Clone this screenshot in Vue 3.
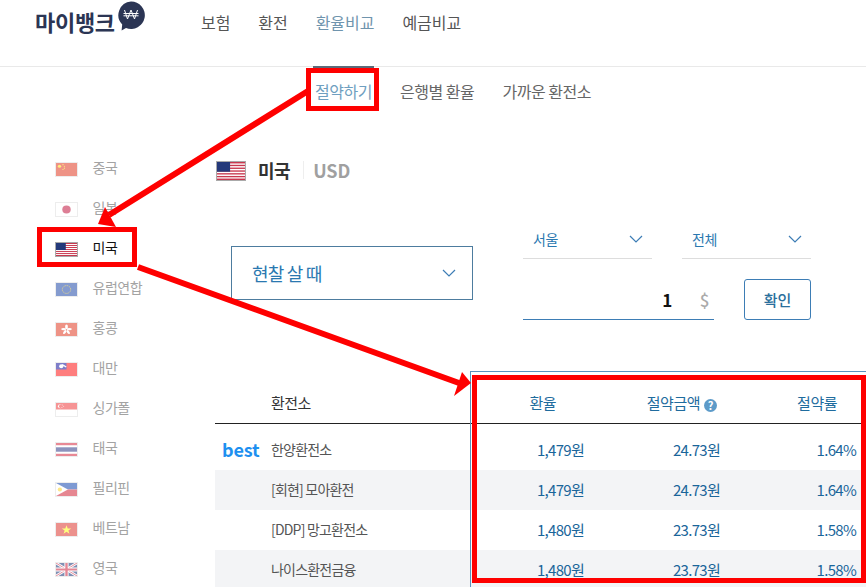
<script setup>
const usa = '<rect width="30" height="20" fill="#fff"/><g fill="#c8384f"><rect width="30" height="1.6"/><rect y="3.1" width="30" height="1.5"/><rect y="6.2" width="30" height="1.5"/><rect y="9.3" width="30" height="1.5"/><rect y="12.4" width="30" height="1.5"/><rect y="15.5" width="30" height="1.5"/><rect y="18.4" width="30" height="1.6"/></g><rect width="14" height="10.8" fill="#24397a"/>'
const flags = {
  cn: '<rect width="30" height="20" fill="#de2910"/><g fill="#ffde00"><circle cx="5" cy="5" r="2.4"/><circle cx="10" cy="2.5" r=".9"/><circle cx="12" cy="5" r=".9"/><circle cx="12" cy="8" r=".9"/><circle cx="10" cy="10" r=".9"/></g>',
  jp: '<rect width="30" height="20" fill="#fff"/><circle cx="15" cy="10" r="6" fill="#bc002d"/>',
  us: usa,
  eu: '<rect width="30" height="20" fill="#0b3aa0"/><circle cx="15" cy="10" r="6" fill="none" stroke="#ffcc00" stroke-width="1.4" stroke-dasharray="1.4 1.7"/>',
  hk: '<rect width="30" height="20" fill="#de2910"/><g fill="#fff"><ellipse cx="15" cy="6" rx="2" ry="3.6"/><ellipse cx="11" cy="9.4" rx="3.6" ry="1.8"/><ellipse cx="19" cy="9.4" rx="3.6" ry="1.8"/><ellipse cx="12.5" cy="14" rx="1.8" ry="3.4" transform="rotate(35 12.5 14)"/><ellipse cx="17.5" cy="14" rx="1.8" ry="3.4" transform="rotate(-35 17.5 14)"/></g>',
  tw: '<rect width="30" height="20" fill="#fe0000"/><rect width="15" height="10" fill="#000095"/><circle cx="7.5" cy="5" r="3" fill="#fff"/><rect x="7" y="1" width="7" height="2" fill="#fff" transform="rotate(35 7.5 5)"/>',
  sg: '<rect width="30" height="20" fill="#fff"/><rect width="30" height="10" fill="#ef2b2d"/><circle cx="6" cy="5" r="3.2" fill="#fff"/><circle cx="7.3" cy="5" r="3" fill="#ef2b2d"/><g fill="#fff"><circle cx="9" cy="3" r=".7"/><circle cx="11" cy="5" r=".7"/><circle cx="8.5" cy="7" r=".7"/></g>',
  th: '<rect width="30" height="20" fill="#fff"/><rect width="30" height="3.4" fill="#d3152d"/><rect y="16.6" width="30" height="3.4" fill="#d3152d"/><rect y="6.6" width="30" height="6.8" fill="#1c2a7d"/>',
  ph: '<rect width="30" height="10" fill="#0038a8"/><rect y="10" width="30" height="10" fill="#ce1126"/><polygon points="0,0 17,10 0,20" fill="#fff"/><circle cx="5.5" cy="10" r="3" fill="#fcd116"/>',
  vn: '<rect width="30" height="20" fill="#da251d"/><polygon points="15,3.6 16.7,8.4 21.8,8.4 17.7,11.5 19.2,16.4 15,13.5 10.8,16.4 12.3,11.5 8.2,8.4 13.3,8.4" fill="#ffff00"/>',
  uk: '<rect width="30" height="20" fill="#012169"/><path d="M0 0L30 20M30 0L0 20" stroke="#fff" stroke-width="4"/><path d="M0 0L30 20M30 0L0 20" stroke="#c8102e" stroke-width="1.4"/><path d="M15 0V20M0 10H30" stroke="#fff" stroke-width="6"/><path d="M15 0V20M0 10H30" stroke="#c8102e" stroke-width="3.4"/>'
}
const countries = [
  { name: '중국', flag: 'cn' },
  { name: '일본', flag: 'jp' },
  { name: '미국', flag: 'us', on: true },
  { name: '유럽연합', flag: 'eu' },
  { name: '홍콩', flag: 'hk' },
  { name: '대만', flag: 'tw' },
  { name: '싱가폴', flag: 'sg' },
  { name: '태국', flag: 'th' },
  { name: '필리핀', flag: 'ph' },
  { name: '베트남', flag: 'vn' },
  { name: '영국', flag: 'uk' }
]
const rows = [
  { name: '한양환전소', rate: '1,479원', save: '24.73원', pct: '1.64%', best: true },
  { name: '[회현] 모아환전', rate: '1,479원', save: '24.73원', pct: '1.64%' },
  { name: '[DDP] 망고환전소', rate: '1,480원', save: '23.73원', pct: '1.58%' },
  { name: '나이스환전금융', rate: '1,480원', save: '23.73원', pct: '1.58%' }
]
</script>

<template>
  <div class="page">
    <header class="top">
      <div class="logo">
        <span class="logo-text">마이뱅크</span>
        <svg class="logo-mark" width="30" height="32" viewBox="0 0 30 32">
          <path d="M15 1.500a13.700 13.700 0 1 1-5 26.400L5.600 30.600l.6-6A13.700 13.700 0 0 1 15 1.500z" fill="#2b3554"/>
          <path d="M8.500 10l3 9 3.500-9 3.500 9 3-9M7.500 13.500h15M7.500 15.800h15" fill="none" stroke="#fff" stroke-width="1"/>
        </svg>
      </div>
      <nav class="nav">
        <a>보험</a>
        <a>환전</a>
        <a class="current">환율비교</a>
        <a>예금비교</a>
      </nav>
    </header>

    <div class="subnav">
      <a class="current">절약하기</a>
      <a>은행별 환율</a>
      <a>가까운 환전소</a>
    </div>

    <div class="content">
      <aside class="side">
        <div v-for="c in countries" :key="c.name" class="side-item" :class="{ on: c.on }">
          <svg class="flag-small" viewBox="0 0 30 20" preserveAspectRatio="none" v-html="flags[c.flag]"></svg>
          <span>{{ c.name }}</span>
        </div>
      </aside>

      <main class="main">
        <div class="title">
          <svg class="flag-big" viewBox="0 0 30 20" preserveAspectRatio="none" v-html="flags.us"></svg>
          <strong>미국</strong>
          <span class="code">USD</span>
        </div>

        <div class="controls">
          <div class="kind">
            <span>현찰 살 때</span>
            <svg width="14" height="8" viewBox="0 0 14 8"><path d="M1 1l6 6 6-6" class="chev"/></svg>
          </div>
          <div class="filters">
            <div class="selects">
              <div class="mini"><span>서울</span><svg width="14" height="8" viewBox="0 0 14 8"><path d="M1 1l6 6 6-6" class="chev"/></svg></div>
              <div class="mini"><span>전체</span><svg width="14" height="8" viewBox="0 0 14 8"><path d="M1 1l6 6 6-6" class="chev"/></svg></div>
            </div>
            <div class="amount">
              <div class="input"><b>1</b><span>$</span></div>
              <button class="ok">확인</button>
            </div>
          </div>
        </div>

        <div class="table">
          <div class="row head">
            <span></span>
            <span class="name">환전소</span>
            <span class="num r1">환율</span>
            <span class="num r2">절약금액<i class="help">?</i></span>
            <span class="num r3">절약률</span>
          </div>
          <div v-for="(r, i) in rows" :key="r.name" class="row body" :class="{ first: i === 0, alt: i % 2 === 1 }">
            <span class="best">{{ r.best ? 'best' : '' }}</span>
            <span class="name">{{ r.name }}</span>
            <span class="num">{{ r.rate }}</span>
            <span class="num">{{ r.save }}</span>
            <span class="num">{{ r.pct }}</span>
          </div>
          <div class="highlight"></div>
        </div>
      </main>
    </div>

    <svg class="marks" width="866" height="587" viewBox="0 0 866 587">
      <g fill="none" stroke="#fe0000">
        <g stroke-width="5">
          <rect x="308.500" y="70.500" width="68" height="38"/>
          <rect x="39.500" y="229.500" width="95" height="35"/>
          <rect x="474.500" y="377.500" width="389" height="203"/>
        </g>
        <path d="M308 91L109 215M138 267L459 383" stroke-width="6"/>
      </g>
      <polygon points="98,224 105,207 116,227" fill="#fe0000"/>
      <polygon points="471,383 462,372 454,396" fill="#fe0000"/>
    </svg>
  </div>
</template>

<style scoped>
.page {
  position: relative;
  width: 866px;
  height: 587px;
  overflow: hidden;
  background: #fff;
  font-family: "Noto Sans CJK KR", "Noto Sans", sans-serif;
  color: #555;
  letter-spacing: -.5px;
}
.top {
  display: flex;
  height: 66px;
  border-bottom: 1px solid #e9e9e9;
  box-sizing: content-box;
}
.logo {
  display: flex;
  align-items: flex-start;
  width: 201px;
  padding-left: 35px;
  box-sizing: border-box;
}
.logo-text {
  margin-top: 5px;
  font-size: 22px;
  line-height: 32px;
  font-weight: 700;
  color: #2b3554;
  letter-spacing: -.3px;
}
.logo-mark { margin: 0 0 0 1px; }
.nav {
  display: flex;
  gap: 28px;
  padding-top: 10px;
  font-size: 16px;
  line-height: 24px;
  color: #555;
  letter-spacing: -.05px;
}
.nav a { position: relative; height: 56px; }
.nav a.current { color: #6f94ad; }
.nav a.current::after {
  content: "";
  position: absolute;
  left: -3px;
  right: 0;
  bottom: -2px;
  height: 2px;
  background: #5b6b7a;
}
.subnav {
  display: flex;
  gap: 28.200px;
  height: 50px;
  padding: 12px 0 0 315px;
  box-sizing: border-box;
  font-size: 16px;
  line-height: 24px;
  color: #666;
}
.subnav .current { color: #6f9fc0; }
.content {
  display: flex;
  margin-top: 31px;
}
.side {
  width: 215px;
  flex: none;
  padding-left: 55px;
  box-sizing: border-box;
}
.side-item {
  display: flex;
  align-items: center;
  height: 40px;
  font-size: 14px;
  color: #a3a3a3;
}
.side-item span { margin: -2px 0 0 14.500px; }
.flag-small {
  width: 23px;
  height: 15px;
  margin-top: 3px;
  box-sizing: border-box;
  border: 1px solid #ddd;
  opacity: .5;
}
.side-item.on { color: #111; }
.side-item.on .flag-small { opacity: 1; border-color: #aaa; }
.main {
  flex: 1;
  min-width: 0;
  padding-top: 13px;
}
.title {
  display: flex;
  align-items: center;
  height: 20px;
  font-size: 18px;
}
.flag-big {
  width: 30px;
  height: 20px;
  margin-left: 1px;
  box-sizing: border-box;
  border: 1px solid #aaa;
}
.title strong {
  margin: -2px 0 0 12px;
  color: #333;
  font-weight: 700;
}
.code {
  margin: -2px 0 0 13px;
  padding-left: 9px;
  border-left: 1px solid #eee;
  line-height: 18px;
  color: #a0a0a0;
  font-weight: 700;
  letter-spacing: 0;
}
.controls {
  display: flex;
  margin-top: 41px;
  height: 98px;
}
.kind {
  display: flex;
  align-items: center;
  justify-content: space-between;
  width: 242px;
  height: 54px;
  margin: 24px 0 0 16px;
  padding: 0 16px 0 20px;
  box-sizing: border-box;
  border: 1px solid #4d7c9f;
  font-size: 18px;
  letter-spacing: -.8px;
  color: #2a78b0;
}
.chev {
  fill: none;
  stroke: #3d7db5;
  stroke-width: 1.200;
}
.filters {
  margin-left: 50px;
  width: 288px;
}
.selects {
  display: flex;
  gap: 30px;
}
.mini {
  display: flex;
  align-items: center;
  justify-content: space-between;
  width: 129px;
  height: 37px;
  padding: 0 9px 2px 10px;
  box-sizing: border-box;
  border-bottom: 1px solid #ddd;
  font-size: 14px;
  color: #2a78b0;
}
.amount {
  display: flex;
  justify-content: space-between;
  margin-top: 20px;
}
.input {
  display: flex;
  align-items: center;
  justify-content: flex-end;
  width: 191px;
  height: 41px;
  padding: 0 5px 0 0;
  box-sizing: border-box;
  border-bottom: 1px solid #3d7db5;
}
.input b {
  font-size: 17px;
  font-weight: 700;
  color: #111;
}
.input span {
  margin-left: 28px;
  font-size: 17px;
  color: #aaa;
  font-weight: 500;
}
.ok {
  width: 67px;
  height: 41px;
  padding: 0;
  background: #fff;
  border: 1px solid #3d7db5;
  border-radius: 3px;
  font-family: inherit;
  font-size: 15px;
  font-weight: 500;
  color: #2a6f9c;
}
.table {
  position: relative;
  margin-top: 51px;
  width: 651px;
}
.row {
  display: grid;
  grid-template-columns: 56px 200px 113px 136px 136px 10px;
  align-items: center;
}
.head {
  height: 53px;
  border-bottom: 1px solid #222;
  box-sizing: border-box;
  font-size: 15px;
  color: #333;
  padding-top: 11px;
}
.head .num {
  color: #1f6c9e;
  font-size: 15px;
  letter-spacing: -.5px;
}
.head .r1 { padding-right: 28px; }
.head .r2 { padding-right: 3px; }
.head .r3 { padding-right: 19px; }
.help {
  display: inline-block;
  width: 13px;
  height: 13px;
  margin-left: 4px;
  border-radius: 50%;
  background: #5d9bc9;
  color: #fff;
  font-style: normal;
  font-weight: 700;
  font-size: 11px;
  line-height: 13px;
  text-align: center;
  vertical-align: -1px;
  letter-spacing: 0;
}
.body {
  height: 40px;
  font-size: 14px;
  color: #555;
  letter-spacing: -.8px;
  padding-bottom: 2px;
  box-sizing: border-box;
}
.body.first { height: 46px; padding: 4px 0 0; }
.body.alt { background: #f3f4f6; }
.num {
  text-align: right;
  font-size: 15px;
  color: #1a659a;
  letter-spacing: -.7px;
}
.best {
  padding-left: 7px;
  font-size: 18px;
  line-height: 20px;
  font-weight: 700;
  color: #1e90f0;
  letter-spacing: -.2px;
}
.highlight {
  position: absolute;
  left: 255px;
  top: 0;
  right: 0;
  bottom: 0;
  border-top: 1px solid #5a93bf;
  border-left: 1px solid #5a93bf;
  pointer-events: none;
}
.marks {
  position: absolute;
  left: 0;
  top: 0;
  pointer-events: none;
}
</style>
